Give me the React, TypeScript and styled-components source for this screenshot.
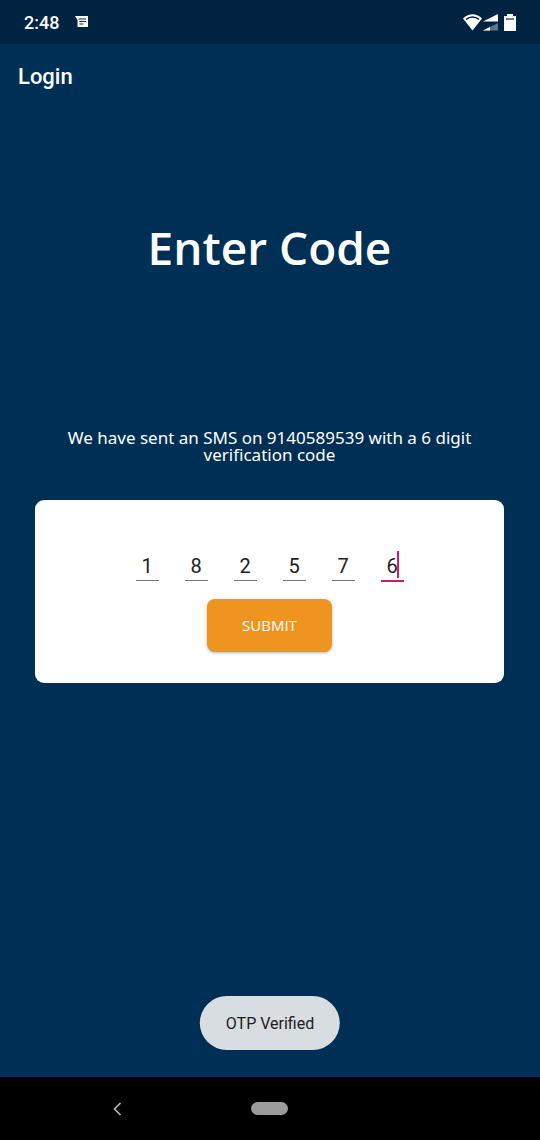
import React, { useState } from 'react';
import styled, { createGlobalStyle } from 'styled-components';

const GlobalStyle = createGlobalStyle`
  * { box-sizing: border-box; }
  body { margin: 0; background: #002f56; font-family: Roboto, sans-serif; }
`;

const Screen = styled.div`
  min-height: 100vh;
  display: flex;
  flex-direction: column;
  background: #002f56;
  color: #fff;
`;

const StatusBar = styled.header`
  height: 44px;
  display: flex;
  align-items: center;
  justify-content: space-between;
  padding: 0 24px;
  background: #002342;
`;

const StatusGroup = styled.div<{ $gap: number }>`
  display: flex;
  align-items: center;
  gap: ${(p) => p.$gap}px;
`;

const Clock = styled.time`
  padding-top: 2px;
  font-size: 18px;
  line-height: 24px;
  font-weight: 500;
`;

const AppBar = styled.div`
  height: 66px;
  display: flex;
  align-items: center;
  padding: 0 18px;
`;

const AppTitle = styled.h1`
  margin: 0;
  font-size: 22px;
  line-height: 28px;
  font-weight: 500;
`;

const Main = styled.main`
  flex: 1;
  display: flex;
  flex-direction: column;
  align-items: stretch;
  padding: 103px 36px 0 35px;
  text-align: center;
`;

const Heading = styled.h2`
  margin: 0;
  font: 600 46px/68px 'Open Sans', sans-serif;
`;

const Message = styled.p`
  margin: 148px auto 0;
  max-width: 430px;
  font: 400 17px/17px 'Noto Sans', sans-serif;
`;

const Card = styled.form`
  margin-top: 37px;
  padding: 48px 0 31px;
  border-radius: 9px;
  background: #fff;
  display: flex;
  flex-direction: column;
  align-items: center;
`;

const Digits = styled.div`
  display: flex;
  gap: 26px;
  height: 34px;
`;

const DigitCell = styled.div<{ $active: boolean }>`
  position: relative;
  width: 23px;
  height: ${(p) => (p.$active ? 34 : 33)}px;
  border-bottom: ${(p) => (p.$active ? '2px solid #c81e63' : '1px solid #777')};

  &::after {
    content: '';
    display: ${(p) => (p.$active ? 'block' : 'none')};
    position: absolute;
    right: 5px;
    top: 3px;
    width: 2px;
    height: 27px;
    background: #c81e63;
  }
`;

const DigitInput = styled.input`
  display: block;
  width: 100%;
  height: 32px;
  margin: 0;
  padding: 3px 0 0;
  border: 0;
  outline: 0;
  background: transparent;
  color: #212121;
  font: 400 20px/28px Roboto, sans-serif;
  text-align: center;
  caret-color: transparent;
`;

const SubmitButton = styled.button`
  margin-top: 17px;
  width: 125px;
  height: 53px;
  padding: 0 0 2px;
  border: 0;
  border-radius: 8px;
  background: #ef9421;
  color: #fff;
  box-shadow: 0 1px 3px rgba(0, 0, 0, 0.3);
  font: 400 15px/20px 'Open Sans', sans-serif;
`;

const Toast = styled.div`
  position: fixed;
  left: 50%;
  bottom: 90px;
  transform: translateX(-50%);
  padding: 18px 26px 16px;
  border-radius: 27px;
  background: #d7dde0;
  color: #1d2023;
  font-size: 16px;
  line-height: 20px;
  white-space: nowrap;
`;

const NavBar = styled.nav`
  height: 63px;
  display: grid;
  grid-template-columns: 235px 1fr 236px;
  align-items: center;
  justify-items: center;
  background: #000;
`;

const NavButton = styled.button`
  display: flex;
  padding: 8px;
  border: 0;
  background: transparent;
`;

const HomePill = styled.span`
  width: 37px;
  height: 13px;
  border-radius: 7px;
  background: #9b9b9b;
`;

const MessageIcon = () => (
  <svg width="14" height="12" viewBox="0 0 14 12" aria-hidden="true">
    <path d="M0 0H13V11H2.500V4Z" fill="#fff" />
    <path d="M3.500 3H11M4.500 5.500H11M4.500 8H8.500" stroke="#002342" strokeWidth="1.100" />
  </svg>
);

const WifiIcon = () => (
  <svg width="20" height="17" viewBox="0 0 20 17" aria-hidden="true">
    <path d="M0 4.400Q9.500 -4 19 4.400L9.500 16.500Z" fill="#fff" />
    <path d="M3 5.400Q9.500 .6 16 5.400" fill="none" stroke="#002342" strokeWidth="1.600" />
  </svg>
);

const SignalIcon = () => (
  <svg width="15" height="17" viewBox="0 0 15 17" aria-hidden="true">
    <path d="M0 7.500L15 0V7.500Z" fill="#fff" />
    <path d="M0 16.500L15 9V16.500Z" fill="#5d7388" />
    <path d="M0 16.500L7 13V16.500Z" fill="#fff" />
  </svg>
);

const BatteryIcon = () => (
  <svg width="12" height="17" viewBox="0 0 12 17" aria-hidden="true">
    <path d="M3 0H9V2H12V17H0V2H3Z" fill="#fff" />
    <path d="M2 4H10V6H2Z" fill="#6f8192" />
  </svg>
);

export default function App() {
  const [code, setCode] = useState(['1', '8', '2', '5', '7', '6']);
  const [active, setActive] = useState(5);

  const change = (index: number, value: string) =>
    setCode(code.map((digit, i) => (i === index ? value : digit)));

  return (
    <Screen>
      <GlobalStyle />
      <StatusBar>
        <StatusGroup $gap={16}>
          <Clock>2:48</Clock>
          <MessageIcon />
        </StatusGroup>
        <StatusGroup $gap={6}>
          <StatusGroup $gap={0}>
            <WifiIcon />
            <SignalIcon />
          </StatusGroup>
          <BatteryIcon />
        </StatusGroup>
      </StatusBar>
      <AppBar>
        <AppTitle>Login</AppTitle>
      </AppBar>
      <Main>
        <Heading>Enter Code</Heading>
        <Message>We have sent an SMS on 9140589539 with a 6 digit verification code</Message>
        <Card onSubmit={(e) => e.preventDefault()}>
          <Digits>
            {code.map((digit, i) => (
              <DigitCell key={i} $active={i === active}>
                <DigitInput
                  aria-label={`Digit ${i + 1}`}
                  inputMode="numeric"
                  maxLength={1}
                  value={digit}
                  onFocus={() => setActive(i)}
                  onChange={(e) => change(i, e.target.value)}
                />
              </DigitCell>
            ))}
          </Digits>
          <SubmitButton type="submit">SUBMIT</SubmitButton>
        </Card>
      </Main>
      <Toast role="status">OTP Verified</Toast>
      <NavBar>
        <NavButton type="button" aria-label="Back">
          <svg width="9" height="14" viewBox="0 0 9 14" aria-hidden="true">
            <path d="M7.500 1L1.500 7L7.500 13" fill="none" stroke="#b5b5b5" strokeWidth="1.700" />
          </svg>
        </NavButton>
        <NavButton type="button" aria-label="Home">
          <HomePill />
        </NavButton>
      </NavBar>
    </Screen>
  );
}
